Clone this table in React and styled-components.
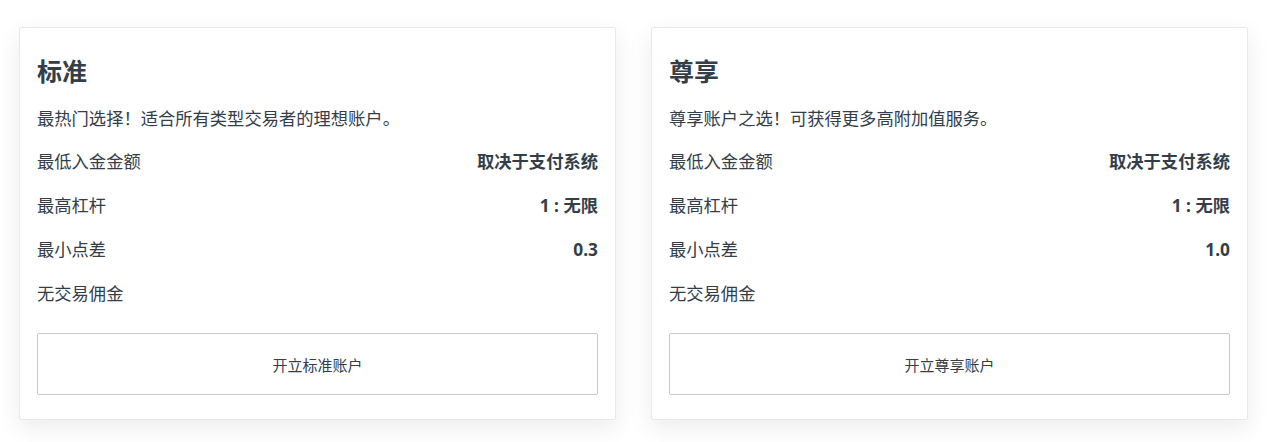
import React from "react";
import styled, { createGlobalStyle } from "styled-components";

const GlobalStyle = createGlobalStyle`
  html, body {
    margin: 0;
    padding: 0;
    background: #ffffff;
  }
  body {
    font-family: "Noto Sans", "Noto Sans CJK SC", sans-serif;
    color: #36414c;
  }
`;

const accounts = [
  {
    title: "标准",
    desc: "最热门选择！适合所有类型交易者的理想账户。",
    rows: [
      { label: "最低入金金额", value: "取决于支付系统" },
      { label: "最高杠杆", value: "1 : 无限" },
      { label: "最小点差", value: "0.3" },
      { label: "无交易佣金", value: "" },
    ],
    action: "开立标准账户",
  },
  {
    title: "尊享",
    desc: "尊享账户之选！可获得更多高附加值服务。",
    rows: [
      { label: "最低入金金额", value: "取决于支付系统" },
      { label: "最高杠杆", value: "1 : 无限" },
      { label: "最小点差", value: "1.0" },
      { label: "无交易佣金", value: "" },
    ],
    action: "开立尊享账户",
  },
];

const App = () => {
  return (
    <>
      <GlobalStyle />
      <Page>
        {accounts.map((acc) => (
          <Card key={acc.title}>
            <Title>{acc.title}</Title>
            <Desc>{acc.desc}</Desc>
            <List>
              {acc.rows.map((row) => (
                <Row key={row.label}>
                  <span>{row.label}</span>
                  <Value>{row.value}</Value>
                </Row>
              ))}
            </List>
            <OpenButton>{acc.action}</OpenButton>
          </Card>
        ))}
      </Page>
    </>
  );
};

const Page = styled.div`
  display: grid;
  grid-template-columns: 597px 597px;
  column-gap: 35px;
  padding: 27px 22px 22px 19px;
`;

const Card = styled.div`
  display: flex;
  flex-direction: column;
  background: #fff;
  border: 1px solid #e8e8e8;
  border-radius: 2px;
  box-shadow: 0 8px 24px rgba(0, 0, 0, 0.08);
  padding: 27px 17px 24px 17px;
`;

const Title = styled.h2`
  margin: 0;
  font-size: 25px;
  line-height: 32px;
  font-weight: 700;
  color: #333e49;
`;

const Desc = styled.p`
  margin: 20px 0 0;
  font-size: 17.3px;
  line-height: 24px;
  color: #333e49;
`;

const List = styled.div`
  display: flex;
  flex-direction: column;
  gap: 20px;
  margin-top: 19px;
`;

const Row = styled.div`
  display: flex;
  justify-content: space-between;
  align-items: center;
  font-size: 17.3px;
  line-height: 24px;
  color: #333e49;
`;

const Value = styled.span`
  font-weight: 700;
`;

const OpenButton = styled.button`
  margin-top: 27px;
  height: 62px;
  width: 100%;
  background: #fff;
  border: 1px solid #c9c9c9;
  border-radius: 2px;
  font-family: inherit;
  font-size: 15px;
  color: #333e49;
  cursor: pointer;
`;

export default App;
